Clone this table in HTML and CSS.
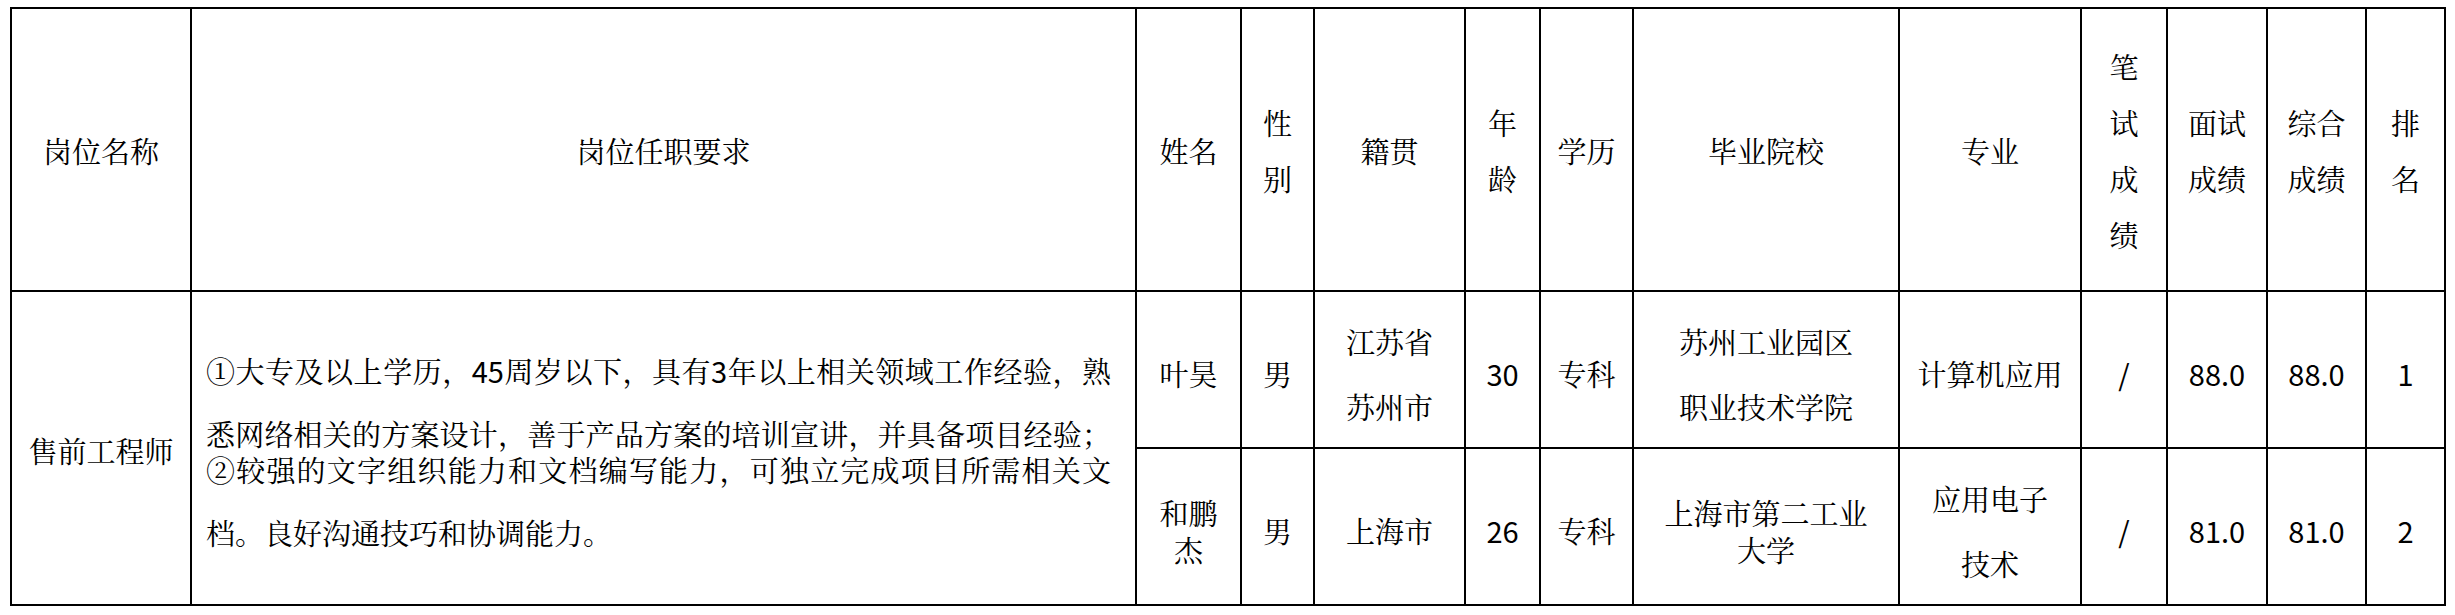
FILE: index.html
```html
<!DOCTYPE html>
<html lang="zh-CN">
<head>
<meta charset="utf-8">
<title>岗位信息表</title>
<link rel="stylesheet" href="styles.css">
</head>
<body>
<div class="sheet">
  <div class="cell head">岗位名称</div>
  <div class="cell head">岗位任职要求</div>
  <div class="cell head">姓名</div>
  <div class="cell head">性<br>别</div>
  <div class="cell head">籍贯</div>
  <div class="cell head">年<br>龄</div>
  <div class="cell head">学历</div>
  <div class="cell head">毕业院校</div>
  <div class="cell head">专业</div>
  <div class="cell head">笔<br>试<br>成<br>绩</div>
  <div class="cell head">面试<br>成绩</div>
  <div class="cell head">综合<br>成绩</div>
  <div class="cell head">排<br>名</div>

  <div class="cell post">售前工程师</div>
  <div class="cell req">
    <p class="para">
      <span class="line">①大专及以上学历，<span class="num">45</span>周岁以下，具有<span class="num">3</span>年以上相关领域工作经验，熟</span>
      <span class="line cont">悉网络相关的方案设计，善于产品方案的培训宣讲，并具备项目经验；</span>
    </p>
    <p class="para">
      <span class="line">②较强的文字组织能力和文档编写能力，可独立完成项目所需相关文</span>
      <span class="line cont last">档。良好沟通技巧和协调能力。</span>
    </p>
  </div>

  <div class="cell body">叶昊</div>
  <div class="cell body">男</div>
  <div class="cell body tall">江苏省<br>苏州市</div>
  <div class="cell body num">30</div>
  <div class="cell body">专科</div>
  <div class="cell body tall">苏州工业园区<br>职业技术学院</div>
  <div class="cell body">计算机应用</div>
  <div class="cell body num">/</div>
  <div class="cell body num">88.0</div>
  <div class="cell body num">88.0</div>
  <div class="cell body num">1</div>

  <div class="cell body">和鹏<br>杰</div>
  <div class="cell body">男</div>
  <div class="cell body">上海市</div>
  <div class="cell body num">26</div>
  <div class="cell body">专科</div>
  <div class="cell body">上海市第二工业<br>大学</div>
  <div class="cell body tall">应用电子<br>技术</div>
  <div class="cell body num">/</div>
  <div class="cell body num">81.0</div>
  <div class="cell body num">81.0</div>
  <div class="cell body num">2</div>
</div>
</body>
</html>
```

FILE: styles.css
```css
html, body {
  margin: 0;
  padding: 0;
  background: #ffffff;
}

body {
  font-family: "Noto Serif CJK SC", "Noto Sans CJK SC", serif;
  font-size: 29px;
  color: #000000;
}

.sheet {
  display: grid;
  grid-template-columns: 178px 943px 103px 71px 149px 73px 91px 264px 180px 84px 98px 97px 77px;
  grid-template-rows: 281px 155px 155px;
  gap: 2px;
  padding: 2px;
  background: #000000;
  width: max-content;
  margin: 7px 0 0 10px;
}

.cell {
  background: #ffffff;
  display: flex;
  align-items: center;
  justify-content: center;
  text-align: center;
  box-sizing: border-box;
  overflow: hidden;
}

.head {
  line-height: 56px;
  padding-top: 3px;
}

.body {
  line-height: 37px;
  padding-top: 8px;
}

.body.tall {
  line-height: 65px;
}

.num {
  font-family: "Noto Sans CJK SC", sans-serif;
}

.post {
  grid-row: 2 / span 2;
  padding-top: 5px;
}

.req {
  grid-row: 2 / span 2;
  flex-direction: column;
  align-items: stretch;
  justify-content: center;
  text-align: left;
  padding: 6px 24px 0 14px;
}

.para {
  margin: 0;
  line-height: 36px;
}

.line {
  display: block;
  text-align: justify;
  text-align-last: justify;
  white-space: nowrap;
}

.line.cont {
  margin-top: 27px;
}

.line.last {
  text-align-last: left;
}
```
